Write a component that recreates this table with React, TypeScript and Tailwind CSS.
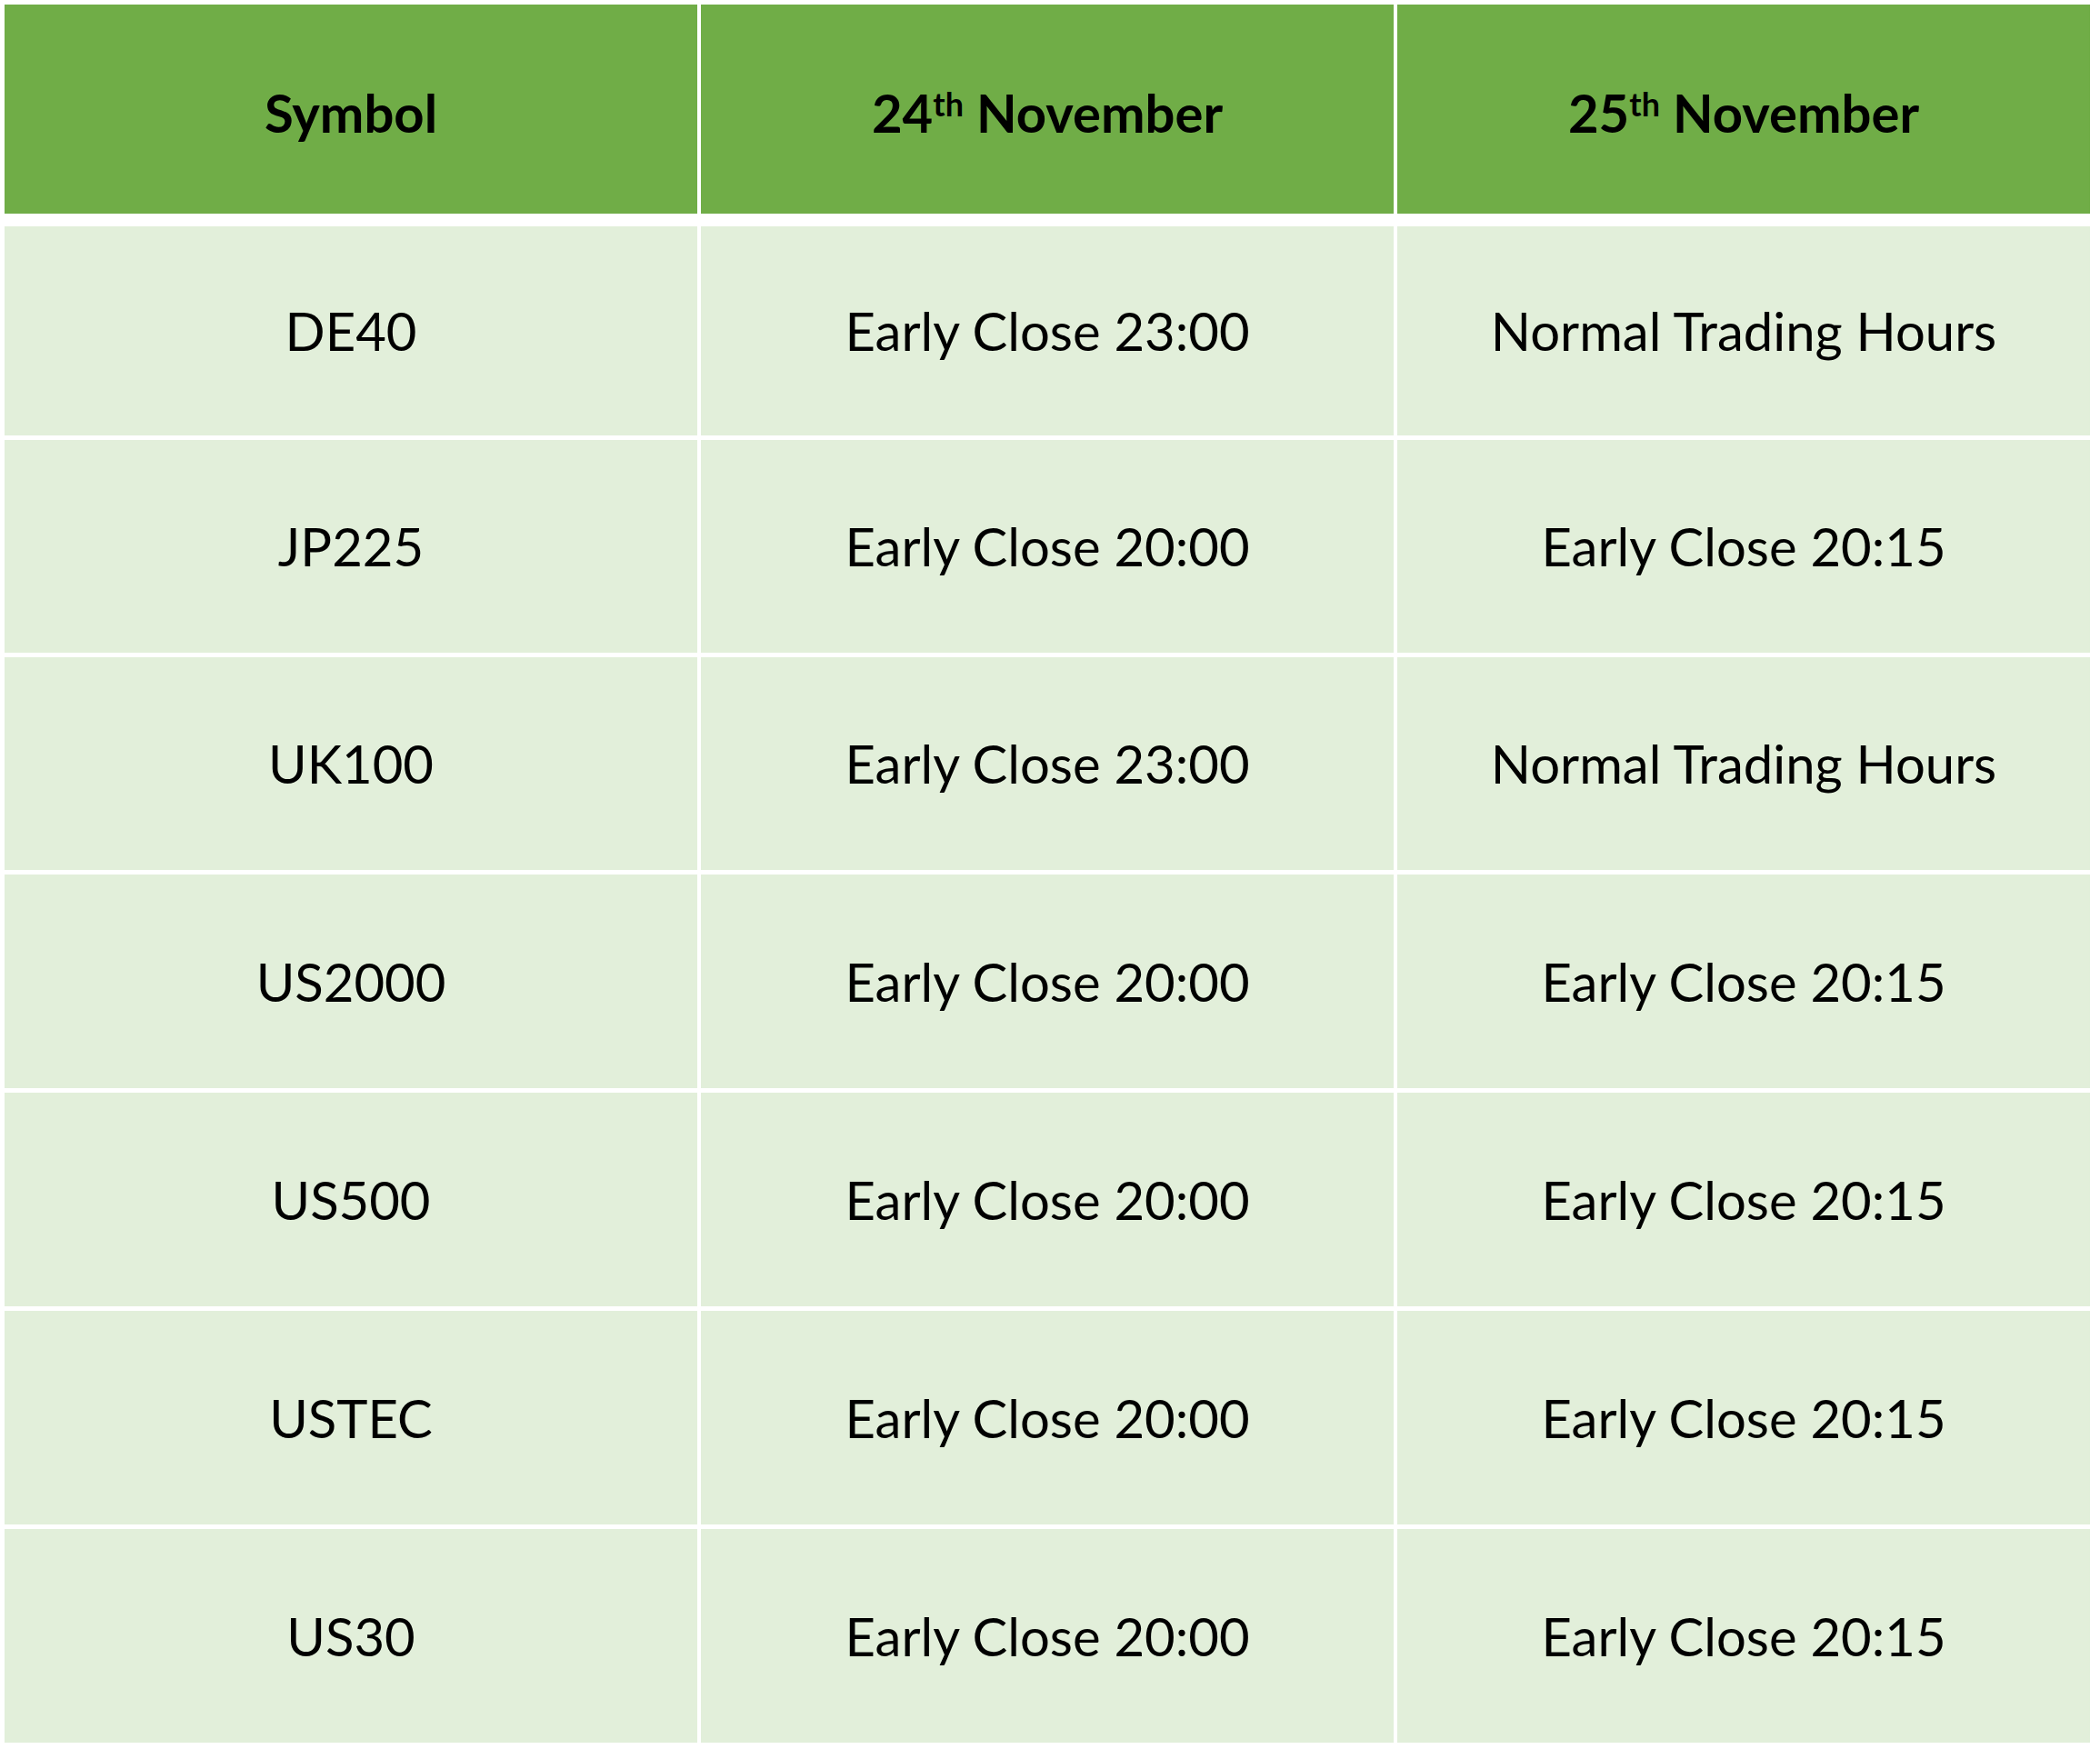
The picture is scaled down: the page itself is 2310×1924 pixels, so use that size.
const rows = [
	["DE40", "Early Close 23:00", "Normal Trading Hours"],
	["JP225", "Early Close 20:00", "Early Close 20:15"],
	["UK100", "Early Close 23:00", "Normal Trading Hours"],
	["US2000", "Early Close 20:00", "Early Close 20:15"],
	["US500", "Early Close 20:00", "Early Close 20:15"],
	["USTEC", "Early Close 20:00", "Early Close 20:15"],
	["US30", "Early Close 20:00", "Early Close 20:15"],
];

// row heights as measured in the source table
const rowHeights = ["h-[230px]", "h-[234px]", "h-[234px]", "h-[235px]", "h-[235px]", "h-[235px]", "h-[235px]"];

function HeaderCell({ children }: { children: React.ReactNode }) {
	return (
		<div className="flex h-[230px] items-center justify-center bg-[#70ad47] pt-[6px] font-bold text-[58px] text-black">
			{children}
		</div>
	);
}

export default function App() {
	return (
		<div
			className="min-h-screen bg-white pt-[5px] pl-[5px]"
			style={{ fontFamily: "Lato, 'Open Sans', sans-serif" }}
		>
			{/* Header */}
			<div className="grid w-[2294px] grid-cols-3 gap-x-[4px]">
				<HeaderCell>Symbol</HeaderCell>
				<HeaderCell>
					<span>
						24<sup className="text-[36px]">th</sup> November
					</span>
				</HeaderCell>
				<HeaderCell>
					<span>
						25<sup className="text-[36px]">th</sup> November
					</span>
				</HeaderCell>
			</div>

			{/* Body */}
			<div className="mt-[14px] flex w-[2294px] flex-col gap-y-[5px]">
				{rows.map((row, r) => (
					<div key={row[0]} className={`grid grid-cols-3 gap-x-[4px] ${rowHeights[r]}`}>
						{row.map((cell, i) => (
							<div
								key={i}
								className="flex items-center justify-center bg-[#e2efda] pb-[1px] text-[58px] text-black"
							>
								{cell}
							</div>
						))}
					</div>
				))}
			</div>
		</div>
	);
}
